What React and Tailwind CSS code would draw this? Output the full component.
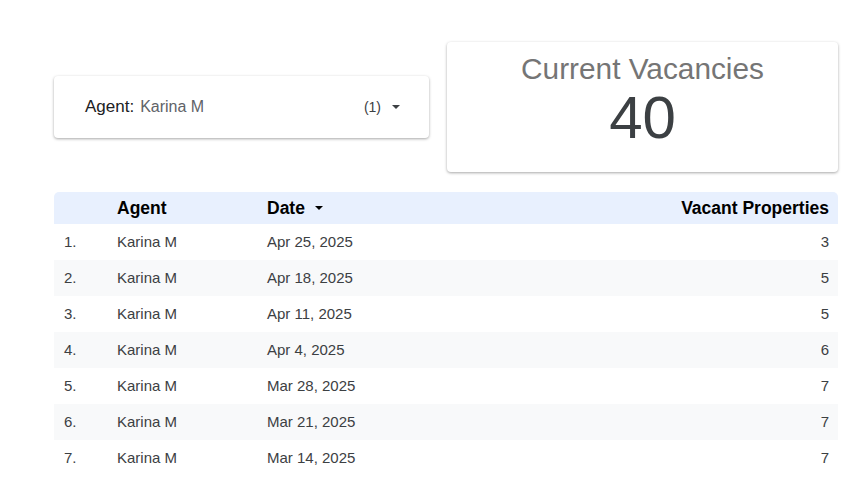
const rows = [
  { agent: 'Karina M', date: 'Apr 25, 2025', vacant: 3 },
  { agent: 'Karina M', date: 'Apr 18, 2025', vacant: 5 },
  { agent: 'Karina M', date: 'Apr 11, 2025', vacant: 5 },
  { agent: 'Karina M', date: 'Apr 4, 2025', vacant: 6 },
  { agent: 'Karina M', date: 'Mar 28, 2025', vacant: 7 },
  { agent: 'Karina M', date: 'Mar 21, 2025', vacant: 7 },
  { agent: 'Karina M', date: 'Mar 14, 2025', vacant: 7 },
];

// small filled dropdown triangle
const Caret = ({ className = '' }) => (
  <svg width="8" height="4" viewBox="0 0 8 4" className={className}>
    <path d="M0 0h8L4 4z" fill="currentColor" />
  </svg>
);

export default function App() {
  return (
    <div
      className="w-[866px] h-[499px] bg-white pl-[54px] pr-[28px] pt-[42px] overflow-hidden"
      style={{ fontFamily: '"Liberation Sans", Arial, sans-serif' }}
    >
      {/* filter control + scorecard */}
      <div className="flex items-center gap-[18px]">
        <div className="w-[375px] h-[62px] bg-white rounded-[4px] shadow-[0_1px_3px_rgba(0,0,0,0.35)] flex items-center pl-[31px] pr-[29px]">
          <span className="text-[17px] text-[#202124]">Agent:</span>
          <span className="ml-[6px] text-[16px] text-[#5f6368]">Karina M</span>
          <span className="ml-auto text-[14px] text-[#3c4043]">(1)</span>
          <Caret className="ml-[11px] text-[#3c4043]" />
        </div>
        <div className="flex-1 h-[130px] bg-white rounded-[4px] shadow-[0_1px_3px_rgba(0,0,0,0.35)] flex flex-col items-center pt-[9px]">
          <div className="text-[29.8px] leading-[36px] text-[#757575]">Current Vacancies</div>
          <div className="text-[60px] leading-[64px] text-[#3c4043] -mt-[1px]">40</div>
        </div>
      </div>

      {/* weekly vacancies table */}
      <div className="mt-[20px] text-[15px]">
        <div className="h-[32px] bg-[#e8f0fe] rounded-t-[5px] flex items-center font-bold text-[17.5px] text-[#000]">
          <div className="w-[63px]" />
          <div className="w-[150px]">Agent</div>
          <div className="flex items-center">
            Date
            <Caret className="ml-[10px]" />
          </div>
          <div className="ml-auto pr-[9px]">Vacant Properties</div>
        </div>
        {rows.map((r, i) => (
          <div
            key={i}
            className={`h-[36px] flex items-center text-[#3c4043] ${i % 2 === 1 ? 'bg-[#f8f9fa]' : 'bg-white'}`}
          >
            <div className="w-[63px] pl-[10px]">{i + 1}.</div>
            <div className="w-[150px]">{r.agent}</div>
            <div>{r.date}</div>
            <div className="ml-auto pr-[9px]">{r.vacant}</div>
          </div>
        ))}
      </div>
    </div>
  );
}
